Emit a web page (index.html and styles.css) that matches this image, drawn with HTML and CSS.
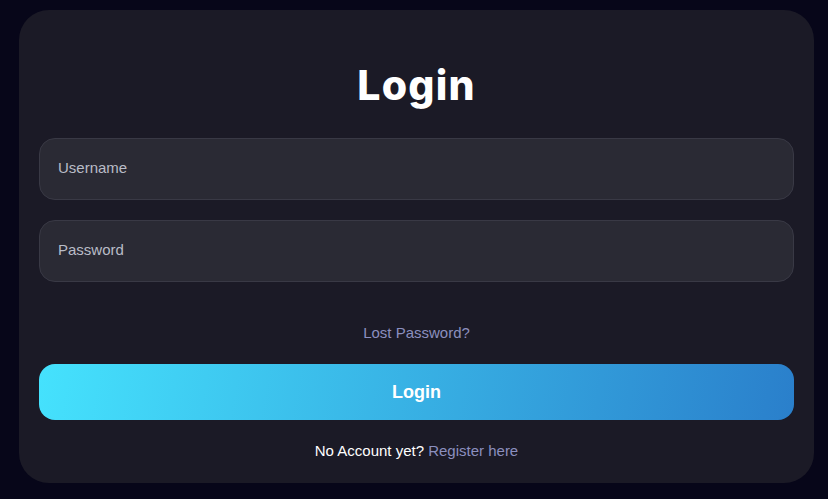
FILE: index.html
```html
<!DOCTYPE html>
<html lang="en">
<head>
    <meta charset="UTF-8">
    <meta name="viewport" content="width=device-width, initial-scale=1.0">
    <title>Login</title>
    <link rel="stylesheet" href="styles.css">
</head>
<body>
    <div class="card">
        <h1>Login</h1>
        <form class="login-form">
            <input type="text" class="field" placeholder="Username">
            <input type="password" class="field" placeholder="Password">
            <a href="#" class="lost">Lost Password?</a>
            <button type="button" class="submit">Login</button>
            <p class="register">No Account yet? <a href="#">Register here</a></p>
        </form>
    </div>
</body>
</html>
```

FILE: styles.css
```css
body {
    margin: 0;
    padding: 10px 14px 16px 19px;
    background-color: #070619;
    font-family: "Liberation Sans", Arial, sans-serif;
}
.card {
    background-color: #1b1a26;
    border-radius: 30px;
    padding: 0 20px;
    height: 473px;
    box-sizing: border-box;
}
h1 {
    margin: 0;
    padding-top: 50px;
    height: 128px;
    box-sizing: border-box;
    text-align: center;
    color: white;
    font-family: Inter, sans-serif;
    font-weight: 800;
    font-size: 41px;
    letter-spacing: 1.2px;
    line-height: 50px;
}
.login-form {
    display: flex;
    flex-direction: column;
}
.field {
    height: 62px;
    box-sizing: border-box;
    margin-bottom: 20px;
    padding: 0 18px 3px;
    background-color: #2a2a34;
    border: 1px solid #393945;
    border-radius: 16px;
    color: #d0d3dc;
    font-family: "Liberation Sans", Arial, sans-serif;
    font-size: 15px;
    outline: none;
}
.field::placeholder {
    color: #b9bcc7;
}
.lost {
    align-self: center;
    margin-top: 22px;
    color: #8b8fbf;
    font-size: 15px;
    line-height: 18px;
    text-decoration: none;
}
.submit {
    height: 56px;
    margin-top: 22px;
    border: none;
    border-radius: 16px;
    background: linear-gradient(100deg, #45e2fd 0%, #2a7fcb 100%);
    color: white;
    font-family: "Liberation Sans", Arial, sans-serif;
    font-size: 18px;
    font-weight: bold;
    cursor: pointer;
}
.register {
    margin: 22px 0 0;
    text-align: center;
    color: white;
    font-size: 15px;
    line-height: 18px;
}
.register a {
    color: #8b8fbf;
    text-decoration: none;
}
```
